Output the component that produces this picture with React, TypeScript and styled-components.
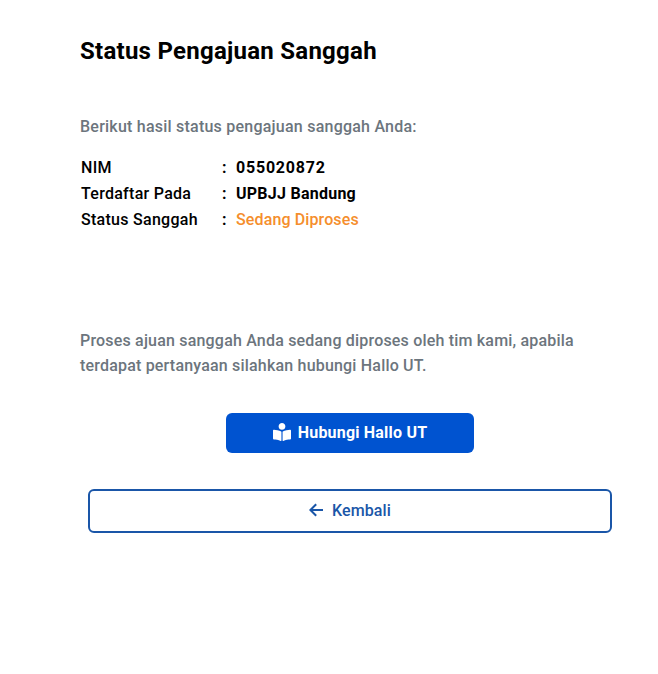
import React from "react";
import styled, { createGlobalStyle } from "styled-components";
import { FaBookReader } from "react-icons/fa";

const Global = createGlobalStyle`
  html, body { margin: 0; padding: 0; background: #fff; }
  body { font-family: Roboto, "Liberation Sans", sans-serif; }
`;

const Page = styled.main`
  width: 658px;
  height: 674px;
  box-sizing: border-box;
  padding: 36px 46px 0 80px;
  display: flex;
  flex-direction: column;
`;

const Title = styled.h1`
  margin: 0;
  font-size: 24px;
  line-height: 30px;
  font-weight: 700;
  letter-spacing: 0.26px;
  color: #000;
`;

const Muted = styled.p`
  margin: 0;
  font-size: 16px;
  line-height: 25px;
  font-weight: 500;
  letter-spacing: 0.19px;
  color: #6c757d;
`;

const Intro = styled(Muted)`
  margin-top: 48px;
  letter-spacing: 0.23px;
`;

const Info = styled.dl`
  margin: 15px 0 0 1px;
  display: grid;
  grid-template-columns: 141px 14px 1fr;
  grid-auto-rows: 26px;
  align-items: center;
  font-size: 16px;
  color: #000;
`;

const Label = styled.dt`
  font-weight: 500;
  letter-spacing: 0.28px;
`;

const Colon = styled.span`
  font-weight: 700;
`;

const Value = styled.dd<{ $accent?: boolean; $spacing?: number }>`
  margin: 0;
  font-weight: ${(p) => (p.$accent ? 500 : 700)};
  letter-spacing: ${(p) => p.$spacing ?? 0.25}px;
  color: ${(p) => (p.$accent ? "#f58e2c" : "#000")};
`;

const Note = styled(Muted)`
  margin-top: 96px;
  width: 510px;
`;

const Primary = styled.button`
  align-self: flex-start;
  margin: 35px 0 0 146px;
  width: 248px;
  height: 40px;
  padding: 0 0 2px;
  border: 0;
  border-radius: 6px;
  background: #0053d0;
  color: #fff;
  font: 700 16px Roboto, sans-serif;
  letter-spacing: 0.2px;
  display: flex;
  align-items: center;
  justify-content: center;
  gap: 7px;
`;

const Secondary = styled.button`
  align-self: flex-start;
  margin: 36px 0 0 8px;
  width: 524px;
  height: 44px;
  padding: 0 0 2px;
  box-sizing: border-box;
  border: 2px solid #1a56a8;
  border-radius: 6px;
  background: #fff;
  color: #1a56a8;
  font: 500 16px Roboto, sans-serif;
  letter-spacing: 0.1px;
  display: flex;
  align-items: center;
  justify-content: center;
  gap: 9px;
`;

const BackArrow = () => (
  <svg width="14" height="14" viewBox="0 0 14 14" fill="none" stroke="currentColor" strokeWidth="2">
    <path d="M14 7H1.5M7.2 1.2L1.4 7l5.8 5.8" />
  </svg>
);

export default function App() {
  return (
    <Page>
      <Global />
      <Title>Status Pengajuan Sanggah</Title>
      <Intro>Berikut hasil status pengajuan sanggah Anda:</Intro>
      <Info>
        <Label>NIM</Label><Colon>:</Colon><Value $spacing={0.78}>055020872</Value>
        <Label>Terdaftar Pada</Label><Colon>:</Colon><Value>UPBJJ Bandung</Value>
        <Label>Status Sanggah</Label><Colon>:</Colon><Value $accent $spacing={0.12}>Sedang Diproses</Value>
      </Info>
      <Note>Proses ajuan sanggah Anda sedang diproses oleh tim kami, apabila terdapat pertanyaan silahkan hubungi Hallo UT.</Note>
      <Primary><FaBookReader size={18} />Hubungi Hallo UT</Primary>
      <Secondary><BackArrow />Kembali</Secondary>
    </Page>
  );
}
